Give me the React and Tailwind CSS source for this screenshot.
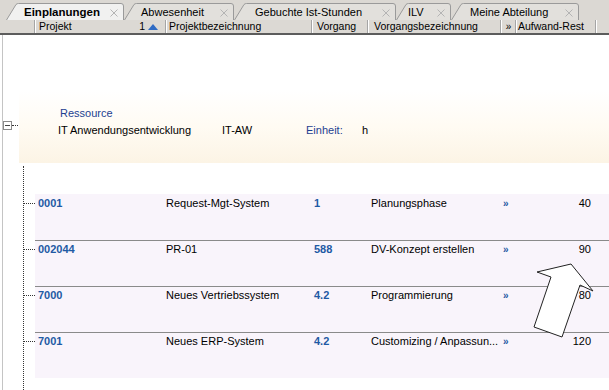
import React from "react";

const tabs = [
  { label: "Einplanungen", w: 118, pl: 18, active: true, ml: 6 },
  { label: "Abwesenheit", w: 110, pl: 17, ml: 0 },
  { label: "Gebuchte Ist-Stunden", w: 162, pl: 21, ml: 0 },
  { label: "ILV", w: 55, pl: 12, ml: 0 },
  { label: "Meine Abteilung", w: 128, pl: 19, ml: 0 },
];

function Tab({ t, z }) {
  const W = t.w;
  const H = 17;
  const d = `M0.5,${H} L10,1.5 Q11,0.5 12.5,0.5 L${W - 3},0.5 Q${W - 0.5},0.5 ${W - 0.5},3 L${W - 0.5},${H}`;
  return (
    <div
      className="relative h-[17px] flex items-center shrink-0"
      style={{ width: W, marginLeft: t.ml, zIndex: z }}
    >
      <svg className="absolute inset-0" width={W} height={H}>
        <path d={d} fill={t.active ? "#f1f1f0" : "#e2e0dc"} stroke="#9a9a9a" strokeWidth="1" />
      </svg>
      <div className="relative flex items-center w-full pr-[6px] pt-[2px]" style={{ paddingLeft: t.pl }}>
        <span className={t.active ? "font-bold text-black text-[11.5px] leading-[13px]" : "text-black text-[11px] leading-[13px]"}>
          {t.label}
        </span>
        <svg className="ml-auto" width="8" height="8" viewBox="0 0 8 8">
          <path d="M0.5,0.5 L7.5,7.5 M7.5,0.5 L0.5,7.5" stroke="#b4b4b4" strokeWidth="1" />
        </svg>
      </div>
    </div>
  );
}

const rows = [
  { id: "0001", name: "Request-Mgt-System", v: "1", vb: "Planungsphase", rest: "40" },
  { id: "002044", name: "PR-01", v: "588", vb: "DV-Konzept erstellen", rest: "90" },
  { id: "7000", name: "Neues Vertriebssystem", v: "4.2", vb: "Programmierung", rest: "80" },
  { id: "7001", name: "Neues ERP-System", v: "4.2", vb: "Customizing / Anpassun...", rest: "120" },
];

export default function App() {
  return (
    <div
      className="relative w-[609px] h-[390px] overflow-hidden bg-white text-[11px] leading-[13px] text-black"
      style={{ fontFamily: '"Liberation Sans", Arial, sans-serif' }}
    >
      {/* Tab bar */}
      <div className="h-[20px] bg-[#dbd8d3] flex items-end">
        {tabs.map((t, i) => (
          <Tab key={t.label} t={t} z={t.active ? 10 : 5 - i} />
        ))}
      </div>

      {/* Header */}
      <div className="h-[15px] bg-[#dcd9d4] border-b-2 border-b-[#5c5c5c] flex text-[10.5px] leading-[13px] whitespace-nowrap">
        <div className="w-[35px] border-r border-r-[#a5a5a5]" />
        <div className="w-[131px] border-l border-l-white border-r border-r-[#a5a5a5] flex items-center pl-[3px] pr-[7px]">
          <span>Projekt</span>
          <span className="ml-auto">1</span>
          <svg className="ml-[3px]" width="10" height="6" viewBox="0 0 10 6">
            <path d="M0,6 L5,0 L10,6 Z" fill="#2f6bc4" />
          </svg>
        </div>
        <div className="w-[146px] border-l border-l-white border-r border-r-[#a5a5a5] pl-[2px]">Projektbezeichnung</div>
        <div className="w-[56px] border-l border-l-white border-r border-r-[#a5a5a5] pl-[4px]">Vorgang</div>
        <div className="w-[133px] border-l border-l-white border-r border-r-[#a5a5a5] pl-[5px]">Vorgangsbezeichnung</div>
        <div className="w-[15px] border-l border-l-white border-r border-r-[#a5a5a5] text-center text-[10px]">»</div>
        <div className="w-[80px] border-l border-l-white border-r border-r-[#a5a5a5] pl-[1px] overflow-hidden">Aufwand-Rest</div>
        <div className="flex-1 border-l border-l-white" />
      </div>

      {/* Content */}
      <div className="ml-[2px] border-l border-l-[#c4c4c4] h-[355px]">
        <div className="h-[55px]" />

        {/* Resource block */}
        <div className="flex h-[73px]">
          <div className="w-[16px] flex items-start pt-[31px]">
            <div className="w-[9px] h-[9px] border border-[#8a8a8a] bg-white flex items-center justify-center shrink-0">
              <div className="w-[5px] h-px bg-[#444]" />
            </div>
            <div className="w-[6px] mt-[4px] border-t border-dotted border-t-[#333]" />
          </div>
          <div className="flex-1 bg-gradient-to-b from-white via-[#fffbf3] to-[#fcf4e5] pt-[17px]">
            <div className="pl-[41px] text-[#1d3f91]">Ressource</div>
            <div className="flex mt-[4px] pl-[39px]">
              <span className="w-[164px]">IT Anwendungsentwicklung</span>
              <span className="w-[84px]">IT-AW</span>
              <span className="w-[56px] text-[#1d3f91]">Einheit:</span>
              <span>h</span>
            </div>
          </div>
        </div>

        {/* Tree rows */}
        <div className="ml-[20px] mt-[3px] h-[224px] border-l border-dotted border-l-[#333] pt-[28px]">
          {rows.map((r, i) => (
            <div key={r.id} className="flex">
              <div className="w-[11px] h-0 mt-[9px] border-t border-dotted border-t-[#333] shrink-0" />
              <div
                className={
                  "flex-1 h-[46px] bg-[#f9f4fb] flex " +
                  (i === 0 ? "pt-[3px]" : "border-t border-t-[#8a8a8a] pt-[2px]")
                }
              >
                <span className="w-[131px] pl-[3px] font-bold text-[#1f5aa4]">{r.id}</span>
                <span className="w-[148px]">{r.name}</span>
                <span className="w-[57px] font-bold text-[#1f5aa4]">{r.v}</span>
                <span className="w-[132px] whitespace-nowrap">{r.vb}</span>
                <span className="w-[20px] font-bold text-[#1f5aa4] text-[10px]">»</span>
                <span className="w-[68px] text-right">{r.rest}</span>
              </div>
            </div>
          ))}
        </div>
      </div>

      {/* Annotation arrow */}
      <svg className="absolute left-0 top-0 pointer-events-none" width="609" height="390">
        <polygon
          points="537,272 571,264 593,291 580,285 562,337 534,327 551,277"
          fill="white"
          stroke="#222"
          strokeWidth="1"
        />
      </svg>
    </div>
  );
}
